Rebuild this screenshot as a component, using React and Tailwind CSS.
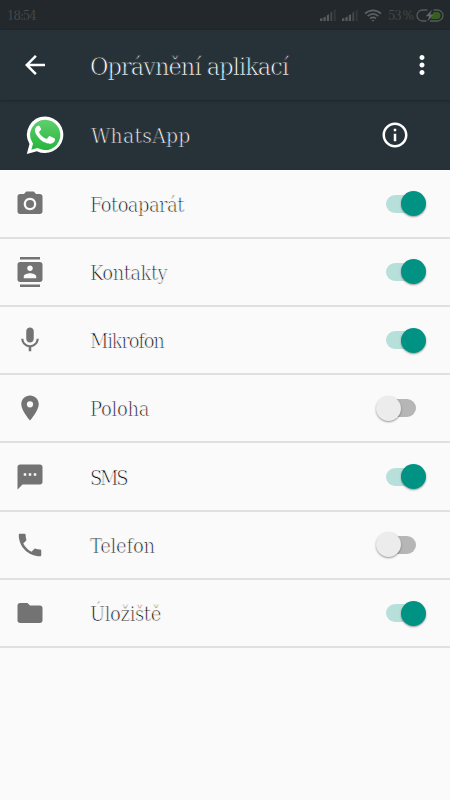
import React, { useState } from 'react';
import {
  MdArrowBack,
  MdContacts,
  MdFolder,
  MdInfoOutline,
  MdMic,
  MdMoreVert,
  MdPhone,
  MdPhotoCamera,
  MdPlace,
  MdSms,
} from 'react-icons/md';

const PERMISSIONS = [
  { id: 'camera', label: 'Fotoaparát', icon: MdPhotoCamera, enabled: true, spacing: 'tracking-[-0.6px]' },
  { id: 'contacts', label: 'Kontakty', icon: MdContacts, enabled: true, spacing: 'tracking-[-0.55px]' },
  { id: 'mic', label: 'Mikrofon', icon: MdMic, enabled: true, spacing: 'tracking-[-1.25px]' },
  { id: 'location', label: 'Poloha', icon: MdPlace, enabled: false, spacing: 'tracking-[-0.3px]' },
  { id: 'sms', label: 'SMS', icon: MdSms, enabled: true, spacing: 'tracking-[-2.2px]' },
  { id: 'phone', label: 'Telefon', icon: MdPhone, enabled: false, spacing: 'tracking-[-0.25px]' },
  { id: 'storage', label: 'Úložiště', icon: MdFolder, enabled: true, spacing: 'tracking-[-0.4px]' },
];

const SignalIcon = () => (
  <svg width="17" height="12" viewBox="0 0 17 12" fill="#565b5d">
    <path d="M0 9.5 2.4 9V12H0z" />
    <path d="M3.4 8.4 5.7 7.5V12H3.4z" />
    <path d="M6.8 6.3 9 5.3V12H6.8z" />
    <path d="M10.3 3.8 12.2 2.6V12h-1.9z" opacity=".65" />
    <path d="M13.6 1.4 15.8 0V12h-2.2z" opacity=".3" />
  </svg>
);

const WifiIcon = () => (
  <svg width="18" height="13" viewBox="0 0 18 13" fill="none" stroke="#5c6162" strokeWidth="1.8">
    <path d="M1 4.6C5.7.2 12.3.2 17 4.6" />
    <path d="M3.6 7.2C7 4.2 11 4.2 14.4 7.2" />
    <path d="M6.1 9.6c2-1.6 3.8-1.6 5.8 0" />
    <path d="M7.5 11 9 12.7l1.5-1.7z" fill="#5c6162" stroke="none" />
  </svg>
);

const BatteryIcon = () => (
  <svg width="28" height="13" viewBox="0 0 28 13">
    <path d="M17.5 3h3.5a3.5 3.5 0 0 1 0 7h-6z" fill="#35601f" />
    <path
      d="M11.5 1H6.5a5.5 5.5 0 0 0 0 11h4M17.5 1h4a5.5 5.5 0 0 1 0 11H14"
      fill="none"
      stroke="#565b5d"
      strokeWidth="1.3"
    />
    <path d="M16 .8 9.8 7.2h3.4L11.5 12.3l6.3-6.8h-3.6z" fill="#656a6b" />
  </svg>
);

const WhatsAppLogo = () => (
  <svg width="38" height="38" viewBox="0 0 38 38">
    <defs>
      <linearGradient id="wa" x1="0" y1="0" x2="0" y2="1">
        <stop offset="0" stopColor="#5fd06c" />
        <stop offset="1" stopColor="#27b43e" />
      </linearGradient>
    </defs>
    <path
      d="M19.2.5a18.3 18.3 0 1 1-8.3 34.7L.8 38l2.7-9.9A18.3 18.3 0 0 1 19.2.5z"
      fill="#fff"
    />
    <path
      d="M19.2 3.7a15.2 15.2 0 1 1-7.6 28.4l-6.3 1.7 1.7-6.1A15.2 15.2 0 0 1 19.2 3.7z"
      fill="url(#wa)"
    />
    <path
      d="M13.8 10.6c-.4-.8-.8-.8-1.3-.8-.7 0-1.4.2-1.9.8-.7.8-1.7 1.8-1.7 3.9 0 2.2 1.6 4.4 2 4.9 2.2 3.3 4.9 5.8 8.3 7.2 3.2 1.3 4.6 1.3 6.2.9 1.2-.3 2.9-1.3 3.3-2.5.4-1.1.4-2 .2-2.3-.2-.4-.6-.5-1.1-.8l-3.6-1.700c-.6-.2-1-.2-1.4.3l-1.6 2c-.4.4-.7.4-1.2.2-2.9-1.1-5.3-3.3-6.800-6-.3-.5 0-.8.3-1.1l1.4-1.8c.3-.4.3-.7.1-1.1z"
      fill="#fff"
    />
  </svg>
);

const Toggle = ({ on, onClick, label }) => (
  <button
    role="switch"
    aria-checked={on}
    aria-label={label}
    onClick={onClick}
    className={`flex h-[26px] w-[50px] items-center ${on ? 'justify-end' : 'justify-start'}`}
  >
    <span className={`h-[18px] w-[28px] rounded-full ${on ? '-mr-[13px] bg-[#b8e0db]' : 'order-2 -ml-[13px] bg-[#b6b6b6]'}`} />
    <span
      className={`z-10 size-[25px] rounded-full shadow-[0_1px_2px_rgba(0,0,0,0.4)] ${on ? 'bg-[#009384]' : 'bg-[#ececec]'}`}
    />
  </button>
);

const App = () => {
  const [permissions, setPermissions] = useState(PERMISSIONS);

  const toggle = (id) => {
    setPermissions((prev) => prev.map((p) => (p.id === id ? { ...p, enabled: !p.enabled } : p)));
  };

  return (
    <div className="flex h-[800px] w-[450px] flex-col overflow-hidden bg-[#fafafa] font-['DejaVu_Serif_Condensed','DejaVu_Serif',serif]">
      {/* Status bar */}
      <div className="flex h-[30px] shrink-0 items-center bg-[#22282b] pr-[6px] pl-[7px] text-[13px] text-[#54595b]">
        <span className="pt-px tracking-[-1px] [-webkit-text-stroke:0.3px_#22282b]">18:54</span>
        <div className="ml-auto flex items-center">
          <SignalIcon />
          <span className="w-[5px]" />
          <SignalIcon />
          <span className="w-[5px]" />
          <WifiIcon />
          <span className="w-[34px] pt-px pl-[6px] tracking-[-1.3px] whitespace-nowrap [-webkit-text-stroke:0.3px_#22282b]">53 %</span>
          <BatteryIcon />
        </div>
      </div>

      {/* Toolbar */}
      <header className="z-10 flex h-[70px] shrink-0 items-center bg-[#273238] pr-[13px] pl-5 text-white shadow-[0_1px_3px_rgba(0,0,0,0.3)]">
        <MdArrowBack size={30} />
        <h1 className="ml-10 pt-[3px] text-[25px] tracking-[-0.95px] [-webkit-text-stroke:0.75px_#273238]">Oprávnění aplikací</h1>
        <MdMoreVert size={30} className="ml-auto" />
      </header>

      {/* App info */}
      <div className="flex h-[70px] shrink-0 items-center bg-[#273238] pr-[40px] pl-[26px] text-white">
        <WhatsAppLogo />
        <span className="ml-[27px] pt-[3px] text-[21px] tracking-[0.2px] [-webkit-text-stroke:0.65px_#273238]">WhatsApp</span>
        <MdInfoOutline size={30} className="ml-auto" />
      </div>

      {/* Permissions */}
      <ul className="pt-[0.4px]">
        {permissions.map(({ id, label, icon: Icon, enabled, spacing }) => (
          <li key={id} className="flex h-[68.25px] items-center border-b-2 border-[#e0e0e0] pr-[24.5px] pl-[15px]">
            <Icon size={30} className="text-[#737373]" />
            <span className={`ml-[45px] pt-[2px] text-[20px] text-black [-webkit-text-stroke:0.7px_#fafafa] ${spacing}`}>{label}</span>
            <span className="ml-auto">
              <Toggle on={enabled} label={label} onClick={() => toggle(id)} />
            </span>
          </li>
        ))}
      </ul>
    </div>
  );
};

export default App;
